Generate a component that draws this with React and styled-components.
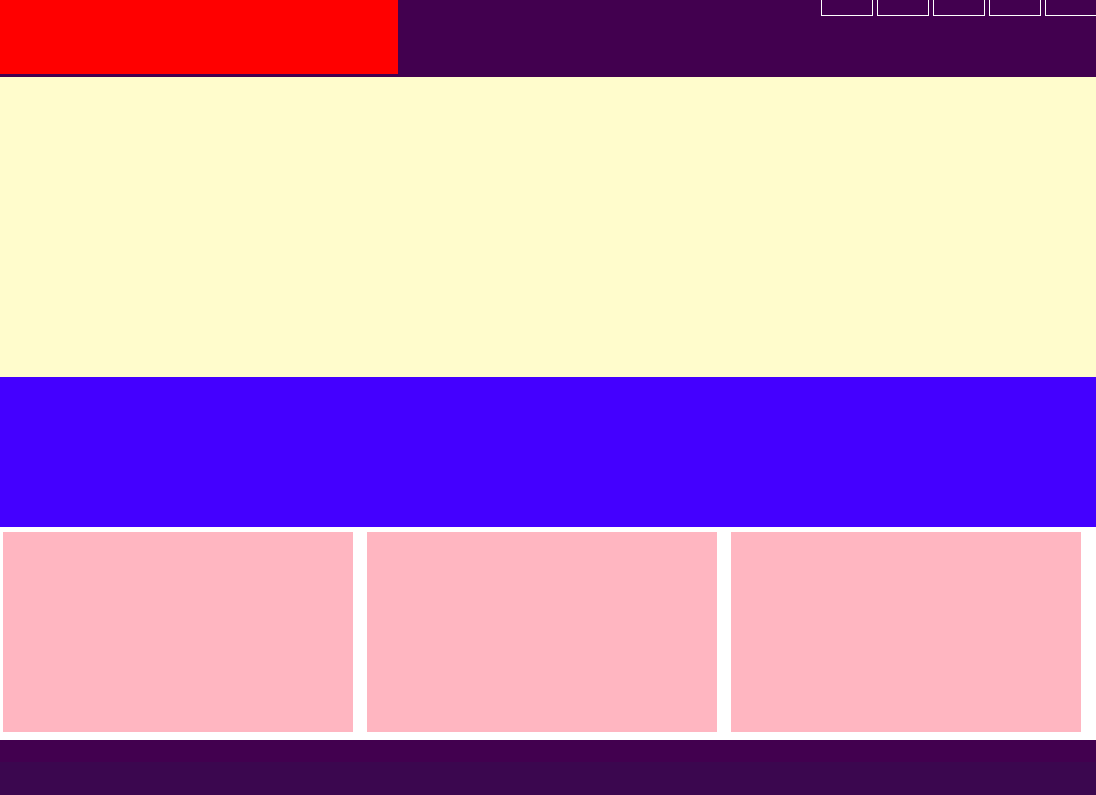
import styled, { createGlobalStyle } from "styled-components";

const GlobalStyle = createGlobalStyle`
  body {
    margin: 0;
    font-family: "Liberation Sans", Arial, sans-serif;
    background-color: #ffffff;
  }
`;

const Header = styled.header`
  display: flex;
  justify-content: space-between;
  align-items: flex-start;
  height: 77px;
  background-color: #42004f;
`;

const Logo = styled.div`
  width: 398px;
  height: 74px;
  background-color: #ff0000;
`;

const Nav = styled.ul`
  display: flex;
  gap: 4px;
  margin: 0 -1px 0 0;
  padding: 0;
  list-style: none;
`;

const NavItem = styled.li`
  width: 50px;
  height: 15px;
  border: 1px solid #ffffff;
  border-top: none;
`;

const Hero = styled.section`
  height: 300px;
  background-color: #fffccc;
`;

const Banner = styled.section`
  height: 150px;
  background-color: #4400ff;
`;

const Cards = styled.section`
  display: flex;
  gap: 14px;
  padding: 5px 3px 8px;
`;

const Card = styled.div`
  width: 350px;
  height: 200px;
  background-color: #ffb6c1;
`;

const Footer = styled.footer`
  display: flex;
  flex-direction: column;
  height: 55px;
`;

const FooterBand = styled.div`
  height: ${(p) => p.$h}px;
  background-color: ${(p) => p.$bg};
`;

const App = () => {
  return (
    <>
      <GlobalStyle />
      <Header>
        <Logo />
        <Nav>
          {[0, 1, 2, 3, 4].map((i) => (
            <NavItem key={i} />
          ))}
        </Nav>
      </Header>
      <Hero />
      <Banner />
      <Cards>
        <Card />
        <Card />
        <Card />
      </Cards>
      <Footer>
        <FooterBand $h={22} $bg="#42004f" />
        <FooterBand $h={33} $bg="#3b074f" />
      </Footer>
    </>
  );
};

export default App;
